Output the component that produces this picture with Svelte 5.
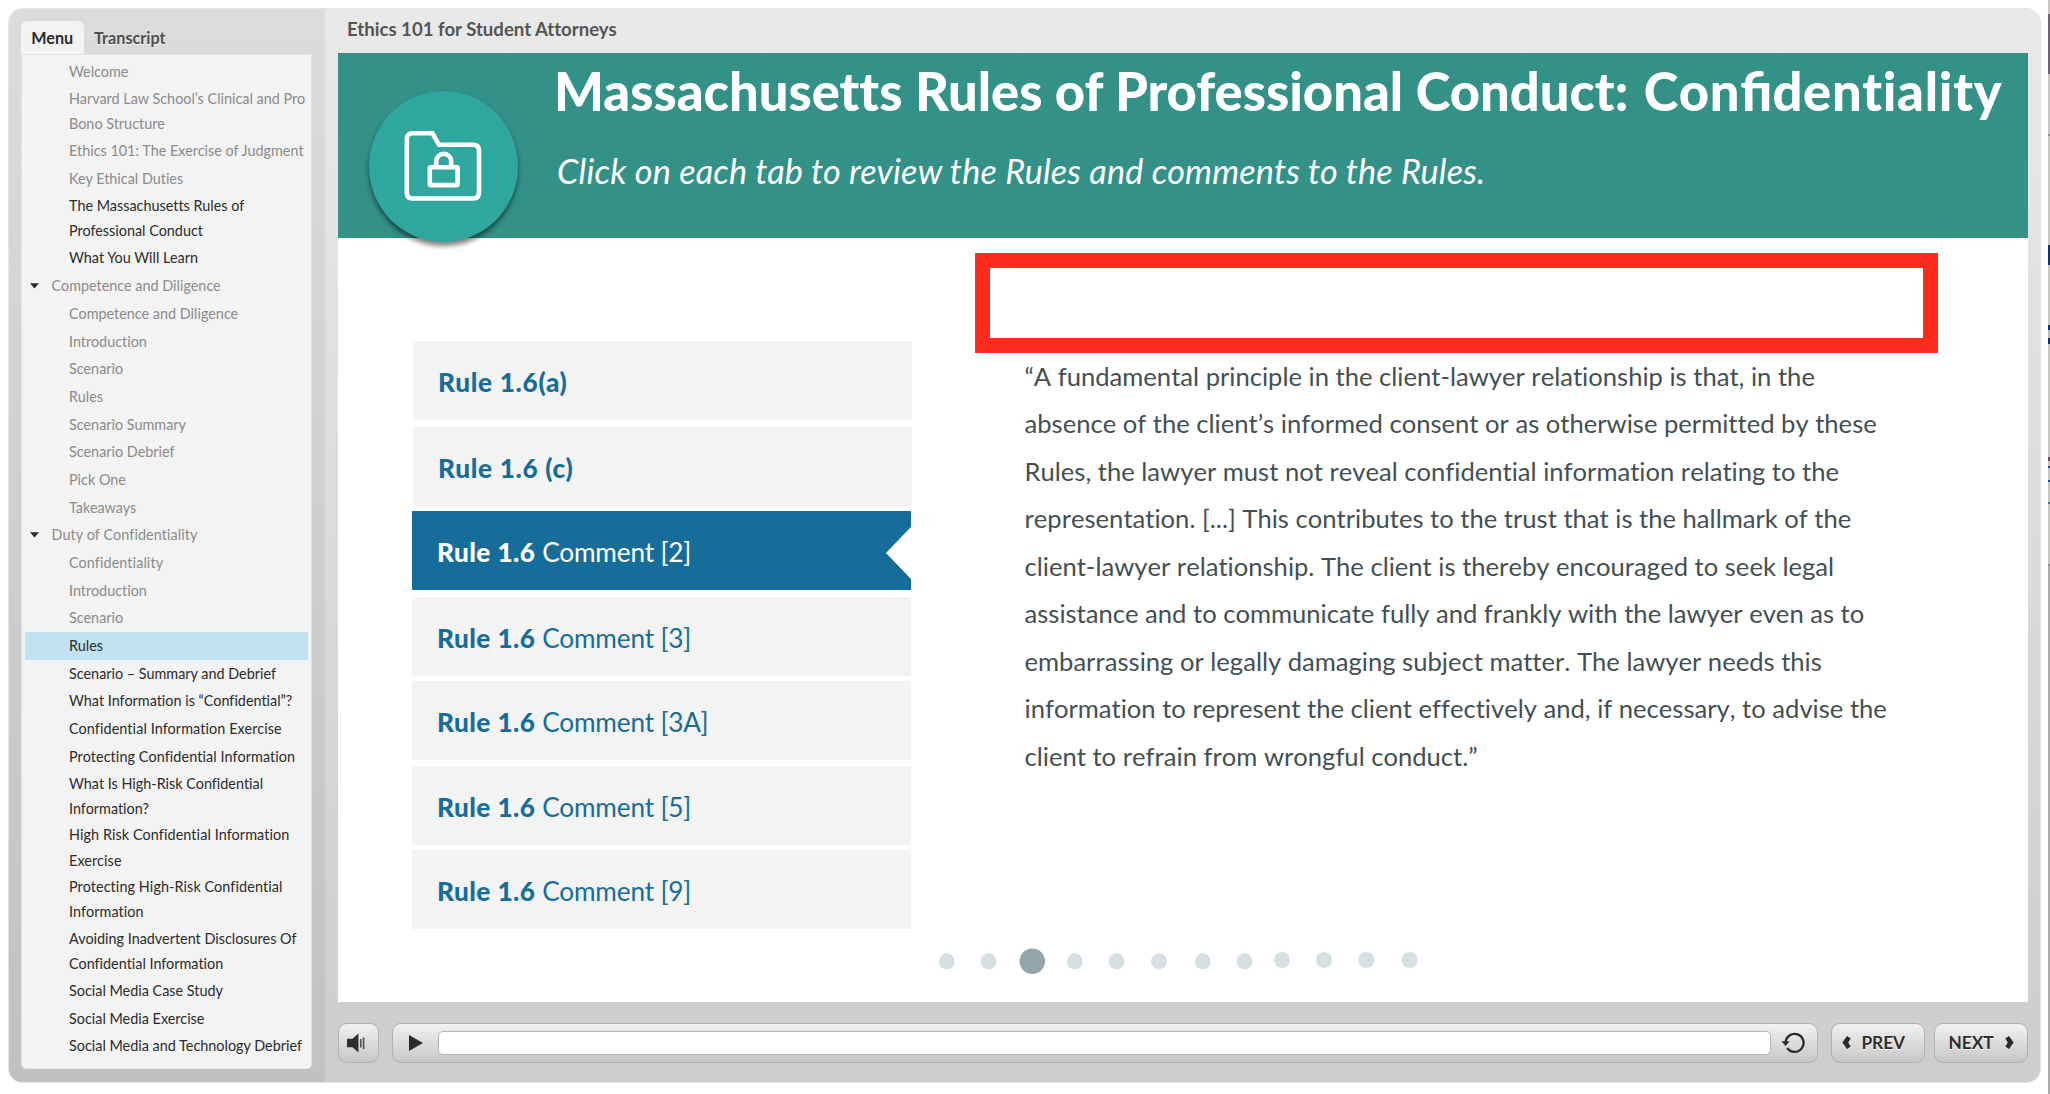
<script>
  const menu = [
    { text: 'Welcome', seen: true },
    { text: 'Harvard Law School’s Clinical and Pro', more: 'Bono Structure', seen: true },
    { text: 'Ethics 101: The Exercise of Judgment', seen: true },
    { text: 'Key Ethical Duties', seen: true },
    { text: 'The Massachusetts Rules of', more: 'Professional Conduct' },
    { text: 'What You Will Learn' },
    { text: 'Competence and Diligence', seen: true, section: true },
    { text: 'Competence and Diligence', seen: true },
    { text: 'Introduction', seen: true },
    { text: 'Scenario', seen: true },
    { text: 'Rules', seen: true },
    { text: 'Scenario Summary', seen: true },
    { text: 'Scenario Debrief', seen: true },
    { text: 'Pick One', seen: true },
    { text: 'Takeaways', seen: true },
    { text: 'Duty of Confidentiality', seen: true, section: true, loose: true },
    { text: 'Confidentiality', seen: true, loose: true },
    { text: 'Introduction', seen: true },
    { text: 'Scenario', seen: true },
    { text: 'Rules', current: true },
    { text: 'Scenario – Summary and Debrief' },
    { text: 'What Information is “Confidential”?' },
    { text: 'Confidential Information Exercise', loose: true },
    { text: 'Protecting Confidential Information', loose: true },
    { text: 'What Is High-Risk Confidential', more: 'Information?' },
    { text: 'High Risk Confidential Information', more: 'Exercise', loose: true },
    { text: 'Protecting High-Risk Confidential', more: 'Information', loose: true },
    { text: 'Avoiding Inadvertent Disclosures Of', more: 'Confidential Information' },
    { text: 'Social Media Case Study' },
    { text: 'Social Media Exercise' },
    { text: 'Social Media and Technology Debrief' },
    { text: 'Takeaways' }
  ];

  const rules = [
    { label: 'Rule 1.6(a)', head: true, gap: 'wide' },
    { label: 'Rule 1.6 (c)', head: true },
    { label: 'Rule 1.6', note: 'Comment [2]', active: true, gap: 'wide' },
    { label: 'Rule 1.6', note: 'Comment [3]' },
    { label: 'Rule 1.6', note: 'Comment [3A]', gap: 'mid' },
    { label: 'Rule 1.6', note: 'Comment [5]' },
    { label: 'Rule 1.6', note: 'Comment [9]' }
  ];

  const body = [
    '“A fundamental principle in the client-lawyer relationship is that, in the',
    'absence of the client’s informed consent or as otherwise permitted by these',
    'Rules, the lawyer must not reveal confidential information relating to the',
    'representation. [...] This contributes to the trust that is the hallmark of the',
    'client-lawyer relationship. The client is thereby encouraged to seek legal',
    'assistance and to communicate fully and frankly with the lawyer even as to',
    'embarrassing or legally damaging subject matter. The lawyer needs this',
    'information to represent the client effectively and, if necessary, to advise the',
    'client to refrain from wrongful conduct.”'
  ];

  const dots = [8.7, 50.7, 94.3, 136.7, 178.7, 221, 264.7, 306.7, 344, 386, 428.3, 471.7];
</script>

<div class="page">
  <div class="player">
    <aside class="sidebar">
      <div class="tabs">
        <span class="tab">Menu</span>
        <span class="idle">Transcript</span>
      </div>
      <nav class="menu">
        {#each menu as m}
          <div class="item" class:seen={m.seen} class:section={m.section} class:current={m.current} class:double={m.more} class:loose={m.loose}>
            {#if m.section}
              <svg width="9" height="6" viewBox="0 0 9 6"><path d="M0 0.3H9L4.5 5.6Z" fill="#2b2b2b" /></svg>
            {/if}
            <span>{m.text}</span>{#if m.more}<span>{m.more}</span>{/if}
          </div>
        {/each}
      </nav>
    </aside>

    <main class="main">
      <header class="brand">Ethics 101 for Student Attorneys</header>

      <section class="slide">
        <div class="banner">
          <div class="badge">
            <svg width="78" height="72" viewBox="0 0 78 72" fill="none" stroke="#fff" stroke-width="4.6">
              <path d="M8.5 3.3H28.5L35 14.8H69Q75 14.8 75 20.8V62.5Q75 68.5 69 68.5H8.5Q2.8 68.5 2.8 62.5V9.3Q2.8 3.3 8.5 3.3Z" />
              <rect x="25.8" y="37.3" width="27.8" height="17.8" rx="1" />
              <path d="M32.2 37V31.5A7.5 7.8 0 0 1 47.2 31.5V37" />
            </svg>
          </div>
          <div class="heading">
            <h1 class="title">Massachusetts Rules of Professional Conduct: <span class="topic">Con<span class="lig">fi</span>dentiality</span></h1>
            <p class="subtitle">Click on each tab to review the Rules and comments to the Rules.</p>
          </div>
        </div>

        <div class="content">
          <div class="rules">
            {#each rules as r}
              <div class="rule {r.gap ?? ''}" class:head={r.head} class:active={r.active}>
                <span><b>{r.label}</b>{#if r.note}&nbsp;<i>{r.note}</i>{/if}</span>
                {#if r.active}
                  <svg width="25" height="52" viewBox="0 0 25 52"><path d="M25 0V52L0 26Z" fill="#fff" /></svg>
                {/if}
              </div>
            {/each}
          </div>

          <div class="detail">
            <div class="frame"></div>
            <p class="body">{#each body as line}<span>{line}</span>{/each}</p>
          </div>
        </div>

        <svg class="dots" width="482" height="28" viewBox="0 0 482 28">
          {#each dots as x, n}
            <circle cx={x} cy={n > 7 ? 13 : 14.3} r={n === 2 ? 12.7 : 8} fill={n === 2 ? '#93a4ab' : '#d5e0e3'} />
          {/each}
        </svg>
      </section>

      <footer class="controls">
        <div class="btn volume">
          <svg width="20" height="20" viewBox="0 0 20 20">
            <path d="M1 5.8H6.5L12.4 0.6V19.4L6.5 14.2H1Z" fill="#2e2e2e" />
            <path d="M14.8 6V14.6M17.6 4.6V16" stroke="#555" stroke-width="1.7" />
          </svg>
        </div>
        <div class="btn seek">
          <svg width="14" height="16" viewBox="0 0 14 16"><path d="M0 0L14 8L0 16Z" fill="#2b2b2b" /></svg>
          <div class="track"></div>
          <svg width="24" height="22" viewBox="0 0 24 22">
            <path d="M4.6 10.6A9 9 0 1 1 6.2 16" fill="none" stroke="#2b2b2b" stroke-width="2.3" />
            <path d="M0.4 9.2H8.6L4.6 14Z" fill="#2b2b2b" />
          </svg>
        </div>
        <div class="btn step">
          <svg width="9" height="13" viewBox="0 0 9 13"><path d="M5 0L8.7 2.4L6.2 6.5L8.7 10.6L5 13L0.4 6.5Z" fill="#2b2b2b" /></svg>
          <span>PREV</span>
        </div>
        <div class="btn step next">
          <span>NEXT</span>
          <svg width="9" height="13" viewBox="0 0 9 13"><path d="M4 0L0.3 2.4L2.8 6.5L0.3 10.6L4 13L8.6 6.5Z" fill="#2b2b2b" /></svg>
        </div>
      </footer>
    </main>
  </div>
  <div class="edge"></div>
</div>

<style>
  :global(body) { background: #fff; }
  .page {
    box-sizing: border-box; width: 2050px; height: 1094px; padding: 8px 0 11px 8px;
    display: flex; justify-content: space-between; overflow: hidden;
    font-family: Lato, "Liberation Sans", sans-serif; font-variant-ligatures: none;
  }
  .player {
    box-sizing: border-box; width: 2033px; height: 1075px; display: flex; overflow: hidden;
    border: 1px solid #e4e4e4; border-radius: 14px;
  }
  .edge {
    width: 2px; margin: -8px 0 -11px;
    background: linear-gradient(#c8c6c3 14px, #6b6572 14px 74px, #c9c8c6 74px 134px, #8f8f8f 134px 136px, #c6c6c3 136px 245px, #16306f 245px 265px, #c6c6c3 265px 325px, #16306f 325px 330px, #bbb 330px 338px, #16306f 338px 344px, #c6c6c3 344px 457px, #65505f 457px 461px, #c6c6c3 461px 466px, #2a4a86 466px 468px, #c6c6c3 468px 480px, #2a4a86 480px 482px, #c6c6c3 482px 502px, #4c7396 502px 504px, #c6c6c3 504px 564px, #8f8f8f 564px 566px, #aaa 566px);
  }

  .sidebar {
    box-sizing: border-box; width: 316px; padding: 12px 12px 13px; display: flex; flex-direction: column;
    background: linear-gradient(#dcdcdc, #c1c1c1);
  }
  .tabs { display: flex; height: 33px; font-size: 16.2px; font-weight: 700; line-height: 33px; }
  .tab { padding: 0 10.3px; background: #f3f3f3; border-radius: 6px 6px 0 0; color: #2b2b2b; }
  .idle { padding-left: 10.5px; color: #505050; text-shadow: 0 1px 0 #efefef; }
  .menu {
    box-sizing: border-box; flex: 1; min-height: 0; width: 291px; padding: 3px 3px 0; overflow: hidden;
    background: #f3f3f3; border: 1px solid #e3e3e3; border-radius: 0 0 5px 5px;
  }
  .item {
    box-sizing: border-box; height: 27.7px; padding-left: 44px; display: flex; flex-direction: column; justify-content: center;
    font-size: 14.4px; line-height: 25.3px; color: #2b2b2b; white-space: nowrap;
  }
  .item.double { height: 51.6px; }
  .item.loose { letter-spacing: 0.09px; }
  .item.seen { color: #8b8b8b; }
  .item.section { flex-direction: row; justify-content: flex-start; align-items: center; padding-left: 5px; gap: 12.5px; }
  .item.current { background: #c1e2f0; }

  .main {
    box-sizing: border-box; flex: 1; padding: 0 12px 0 13px; display: flex; flex-direction: column;
    background: linear-gradient(#e9e9e9, #cdcdcd);
  }
  .brand { height: 44px; padding-left: 9px; font-size: 18.6px; font-weight: 700; line-height: 41px; color: #555; }
  .slide { height: 949px; display: flex; flex-direction: column; background: #fff; }
  .banner { height: 184.5px; display: flex; background: #339188; color: #fff; }
  .badge {
    width: 149px; height: 151px; margin: 38px 0 0 30.5px; display: flex; align-items: center; justify-content: center;
    border-radius: 50%; background: #2fa79f; box-shadow: 0 4px 5px rgba(0, 0, 0, 0.5);
  }
  .badge svg { margin-top: -2px; }
  .heading { margin-left: 34.5px; white-space: nowrap; }
  .title { margin: 0; padding: 6px 0 0 2px; font-size: 52.5px; font-weight: 900; line-height: 64px; }
  .topic { margin-left: 3px; letter-spacing: 0.75px; }
  .lig { font-variant-ligatures: normal; letter-spacing: 0; }
  .subtitle { margin: 15px 0 0 5px; font-size: 34.2px; letter-spacing: 0.18px; font-style: italic; line-height: 66px; }

  .content { height: 711px; display: flex; }
  .rules { width: 500px; padding: 103.5px 0 0 74px; }
  .rule {
    box-sizing: border-box; width: 499px; height: 79px; margin-bottom: 5px; padding-left: 25px;
    display: flex; align-items: center; justify-content: space-between;
    background: #f3f3f3; color: #176d9a; font-size: 26.2px;
  }
  .rule.wide { margin-bottom: 7px; }
  .rule.mid { margin-bottom: 6px; }
  .rule.head { margin-left: 1px; }
  .rule.active { background: #176d9a; color: #fff; }
  .rule.active svg { margin-top: 4px; }
  .rule span { padding-top: 3.5px; white-space: nowrap; }
  .rule.head span { padding-top: 3px; }
  .rule b { font-weight: 900; letter-spacing: 0.45px; }
  .rule.head b { letter-spacing: 0.7px; }
  .rule i { font-style: normal; letter-spacing: -0.15px; }

  .detail { padding: 15px 0 0 63px; }
  .frame { box-sizing: border-box; width: 963px; height: 100.5px; border: 15px solid #fe2c1e; }
  .body {
    margin: -0.3px 0 0 49.5px; display: flex; flex-direction: column; font-size: 25.6px; line-height: 47.5px;
    font-kerning: none; white-space: nowrap; color: #434f53; width: fit-content;
  }
  .dots { align-self: flex-start; margin: -2px 0 0 600px; }

  .controls { flex: 1; padding-top: 21px; display: flex; align-items: flex-start; }
  .btn {
    box-sizing: border-box; height: 40px; display: flex; align-items: center; justify-content: center;
    border: 1.5px solid #b1b1b1; border-radius: 9px; background: linear-gradient(#f1f1f1, #c7c7c7);
    font-size: 17.3px; font-weight: 700; color: #2e2e2e; text-shadow: 0 1px 0 #fff;
  }
  .volume { width: 41px; margin-right: 13px; padding-right: 5px; }
  .seek { width: 1426px; margin-right: 13px; padding: 0 12px 0 16px; justify-content: flex-start; }
  .track {
    box-sizing: border-box; flex: 1; height: 24px; margin: 0 10px 0 15px; background: #fff;
    border: 1px solid #b5b5b5; border-radius: 5px;
  }
  .step { width: 94px; margin-right: 9px; padding: 0 9px 1px 0; gap: 10.5px; }
  .next { margin-right: 0; padding-right: 0; gap: 11px; }
</style>
